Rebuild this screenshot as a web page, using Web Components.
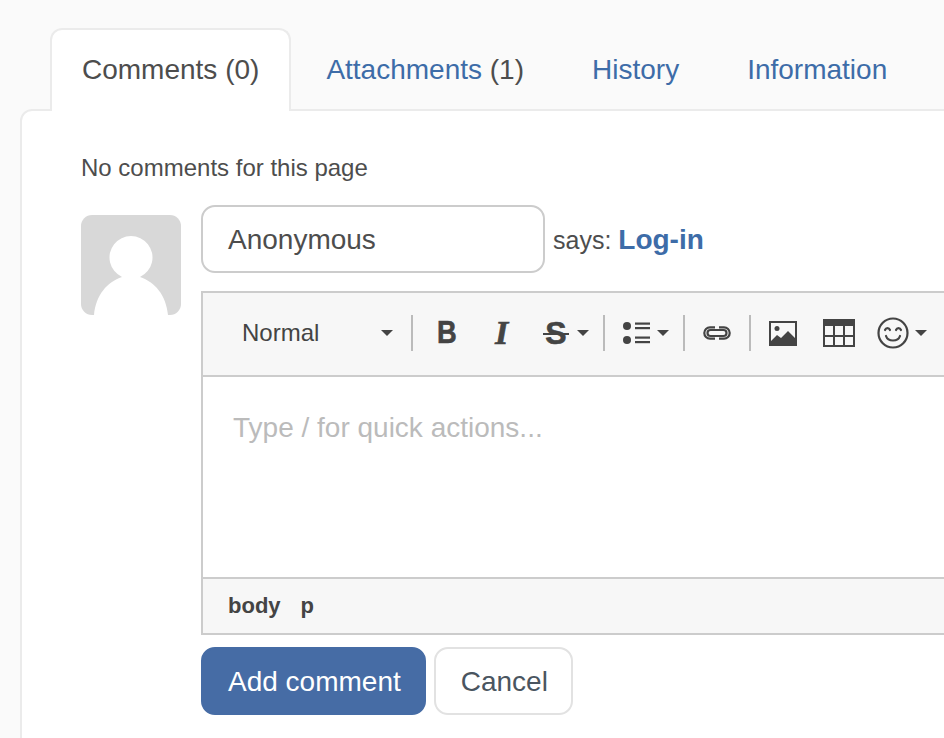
<!DOCTYPE html>
<html>
<head>
<meta charset="utf-8">
<title>Comments</title>
<style>
  html, body { margin: 0; height: 100%; overflow: hidden; background: #fafafa; }
  body { font-family: "Liberation Sans", Arial, sans-serif; color: #4d4d4d; }
</style>
</head>
<body>
<comments-panel>
  <tab-item slot="tabs" active>Comments (0)</tab-item>
  <tab-item slot="tabs" style="--tab-gap: 3px"><a-link>Attachments</a-link> (1)</tab-item>
  <tab-item slot="tabs" style="--tab-gap: 4px"><a-link>History</a-link></tab-item>
  <tab-item slot="tabs" style="--tab-gap: 4px"><a-link>Information</a-link></tab-item>
  <comment-form>No comments for this page</comment-form>
</comments-panel>

<script>
/**
 * Small elements first, the form and panel build on them.
 */
function define(name, markup, init) {
  const template = document.createElement('template');
  template.innerHTML = markup;
  customElements.define(name, class extends HTMLElement {
    constructor() {
      super();
      this.attachShadow({ mode: 'open' });
      this.shadowRoot.appendChild(template.content.cloneNode(true));
      if (init) init(this);
    }
  });
}

define('a-link', `
  <style>:host { color: #3d6ca8; }</style>
  <slot></slot>
`);

define('tab-item', `
  <style>
    :host {
      display: block;
      box-sizing: border-box;
      height: 83px;
      margin-left: var(--tab-gap, 0);
      padding: 0 30px;
      border: 2px solid transparent;
      border-bottom: 0;
      border-radius: 12px 12px 0 0;
      font-size: 28px;
      line-height: 80px;
      color: #4d4d4d;
      white-space: nowrap;
    }
    :host([active]) {
      position: relative;
      z-index: 1;
      background: #fff;
      border-color: #ebebeb;
    }
  </style>
  <slot></slot>
`);

define('user-avatar', `
  <style>
    :host {
      display: block;
      width: 100px;
      height: 100px;
      flex-shrink: 0;
      margin-top: 10px;
    }
    svg { display: block; }
  </style>
  <svg width="100" height="100" viewBox="0 0 100 100">
    <rect width="100" height="100" rx="11" fill="#d8d8d8"/>
    <path d="M13 100C15 80 26 67 41 62A21.500 21.500 0 1 1 59 62C74 67 85 80 87 100Z" fill="#fff"/>
  </svg>
`);

define('text-input', `
  <style>
    :host {
      display: block;
      box-sizing: border-box;
      width: 344px;
      height: 68px;
      padding-left: 25px;
      border: 2px solid #ccc;
      border-radius: 14px;
      background: #fff;
      font-size: 28px;
      line-height: 66px;
      color: #4d4d4d;
    }
  </style>
  <slot></slot>
`);

define('tool-caret', `
  <style>
    :host {
      display: block;
      width: 0;
      height: 0;
      margin-left: var(--gap, 8px);
      border-top: 6px solid #444;
      border-left: 6px solid transparent;
      border-right: 6px solid transparent;
      flex-shrink: 0;
    }
  </style>
`);

define('tool-sep', `
  <style>
    :host {
      display: block;
      width: 2px;
      height: 36px;
      margin-left: var(--gap, 0);
      background: #bbb;
      flex-shrink: 0;
    }
  </style>
`);

define('editor-toolbar', `
  <style>
    :host {
      display: flex;
      align-items: center;
      box-sizing: border-box;
      height: 84px;
      padding: 0 0 2px 39px;
      background: #f7f7f7;
      border-bottom: 2px solid #ccc;
      color: #444;
      white-space: nowrap;
    }
    .style { font-size: 24px; width: 139px; }
    .b, .i, .s { display: block; flex-shrink: 0; -webkit-text-stroke: 0.6px #444; }
    .b {
      margin-left: 24px;
      width: 20px;
      font: bold 31px "Liberation Sans", sans-serif;
      transform: scaleX(0.88);
      transform-origin: left center;
    }
    .i { margin-left: 38px; width: 16px; font: italic bold 34px "Liberation Serif", serif; }
    .s {
      position: relative;
      margin-left: 32px;
      width: 26px;
      text-align: center;
      font: bold 32px "Liberation Sans", sans-serif;
    }
    .s::after {
      content: "";
      position: absolute;
      left: 0;
      right: 0;
      top: 18px;
      height: 2px;
      background: #444;
    }
    svg { display: block; flex-shrink: 0; }
  </style>
  <span class="style">Normal</span>
  <tool-caret style="--gap: 0"></tool-caret>
  <tool-sep style="--gap: 18px"></tool-sep>
  <span class="b">B</span>
  <span class="i">I</span>
  <span class="s">S</span>
  <tool-caret></tool-caret>
  <tool-sep style="--gap: 14px"></tool-sep>

  <!-- list -->
  <svg style="margin-left:18px" width="27" height="24" viewBox="0 0 27 24" fill="#444">
    <circle cx="4" cy="5" r="4"/><circle cx="4" cy="19" r="4"/>
    <rect x="12" y="1.500" width="15" height="2.200"/><rect x="12" y="6" width="15" height="2.200"/>
    <rect x="12" y="15.500" width="15" height="2.200"/><rect x="12" y="20" width="15" height="2.200"/>
  </svg>
  <tool-caret style="--gap: 7px"></tool-caret>
  <tool-sep style="--gap: 14px"></tool-sep>

  <!-- link -->
  <svg style="margin-left:18px" width="28" height="14" viewBox="0 0 28 14" fill="none" stroke="#444" stroke-width="2.200">
    <path d="M12 1.300H7a5.700 5.700 0 0 0 0 11.400h5"/>
    <path d="M16 1.300h5a5.700 5.700 0 0 1 0 11.400h-5"/>
    <path d="M16 4H7.500a3 3 0 0 0 0 6H12"/>
    <path d="M16 4h4.500a3 3 0 0 1 0 6H12"/>
  </svg>
  <tool-sep style="--gap: 18px"></tool-sep>

  <!-- image -->
  <svg style="margin-left:18px" width="28" height="25" viewBox="0 0 28 25">
    <rect x="1" y="1" width="26" height="23" fill="none" stroke="#444" stroke-width="2"/>
    <circle cx="8" cy="7.500" r="2.500" fill="#444"/>
    <path d="M2 24v-4l6-6 4 3 7-7 7 7v7z" fill="#444"/>
  </svg>

  <!-- table -->
  <svg style="margin-left:26px" width="32" height="28" viewBox="0 0 32 28">
    <rect x="1" y="1" width="30" height="26" fill="none" stroke="#444" stroke-width="2"/>
    <rect width="32" height="7" fill="#444"/>
    <path d="M1 17h30M11 7v20M21 7v20" stroke="#444" stroke-width="2"/>
  </svg>

  <!-- emoji -->
  <svg style="margin-left:22px" width="32" height="32" viewBox="0 0 32 32" fill="none" stroke="#444" stroke-width="2.200" stroke-linecap="round">
    <circle cx="16" cy="16" r="14.500"/>
    <path d="M8 13c1-2.500 4-2.500 5 0M19 13c1-2.500 4-2.500 5 0"/>
    <path d="M9 19c2 6 12 6 14 0"/>
  </svg>
  <tool-caret style="--gap: 6px"></tool-caret>
`);

define('editor-area', `
  <style>
    :host {
      display: block;
      box-sizing: border-box;
      height: 202px;
      padding: 33px 30px 0;
      background: #fff;
      font-size: 28px;
      line-height: 36px;
      color: #bbb;
      border-bottom: 2px solid #ccc;
    }
  </style>
  <slot></slot>
`);

define('editor-status', `
  <style>
    :host {
      display: flex;
      align-items: center;
      gap: 20px;
      height: 54px;
      padding-left: 25px;
      background: #f7f7f7;
      font-size: 22px;
      font-weight: bold;
      color: #444;
    }
  </style>
  <span>body</span><span>p</span>
`);

define('rich-editor', `
  <style>
    :host {
      display: block;
      border: 2px solid #ccc;
      border-right: 0;
    }
  </style>
  <editor-toolbar></editor-toolbar>
  <editor-area>Type / for quick actions...</editor-area>
  <editor-status></editor-status>
`);

define('form-button', `
  <style>
    :host {
      display: block;
      box-sizing: border-box;
      height: 68px;
      padding: 0 23px 0 25px;
      border: 2px solid #e2e2e2;
      border-radius: 14px;
      background: #fff;
      font-size: 28px;
      line-height: 65px;
      color: #4a5560;
      white-space: nowrap;
    }
    :host([primary]) {
      border-color: #466ca5;
      background: #466ca5;
      color: #fff;
    }
  </style>
  <slot></slot>
`);

define('comment-form', `
  <style>
    :host {
      display: block;
      padding: 42px 0 0 59px;
      font-size: 24px;
    }
    .empty { line-height: 30px; margin-bottom: 22px; }
    .row { display: flex; gap: 20px; }
    .main { flex: 1; min-width: 0; }
    .who {
      display: flex;
      align-items: center;
      gap: 8px;
      margin-bottom: 18px;
    }
    .says { font-size: 25px; padding-top: 1px; }
    .log-in { font-size: 28px; font-weight: bold; color: #3d6ca8; }
    .actions { display: flex; gap: 8px; margin-top: 12px; }
  </style>
  <div class="empty"><slot></slot></div>
  <div class="row">
    <user-avatar></user-avatar>
    <div class="main">
      <div class="who">
        <text-input>Anonymous</text-input>
        <span class="says">says: <span class="log-in">Log-in</span></span>
      </div>
      <rich-editor></rich-editor>
      <div class="actions">
        <form-button primary>Add comment</form-button>
        <form-button>Cancel</form-button>
      </div>
    </div>
  </div>
`);

define('comments-panel', `
  <style>
    :host {
      display: block;
      padding: 28px 0 0 20px;
      width: 1000px;
    }
    .tabs { display: flex; padding-left: 30px; margin-bottom: -2px; }
    .card {
      box-sizing: border-box;
      height: 700px;
      background: #fff;
      border: 2px solid #ebebeb;
      border-radius: 12px 0 0 0;
    }
  </style>
  <div class="tabs"><slot name="tabs"></slot></div>
  <div class="card"><slot></slot></div>
`);
</script>
</body>
</html>
